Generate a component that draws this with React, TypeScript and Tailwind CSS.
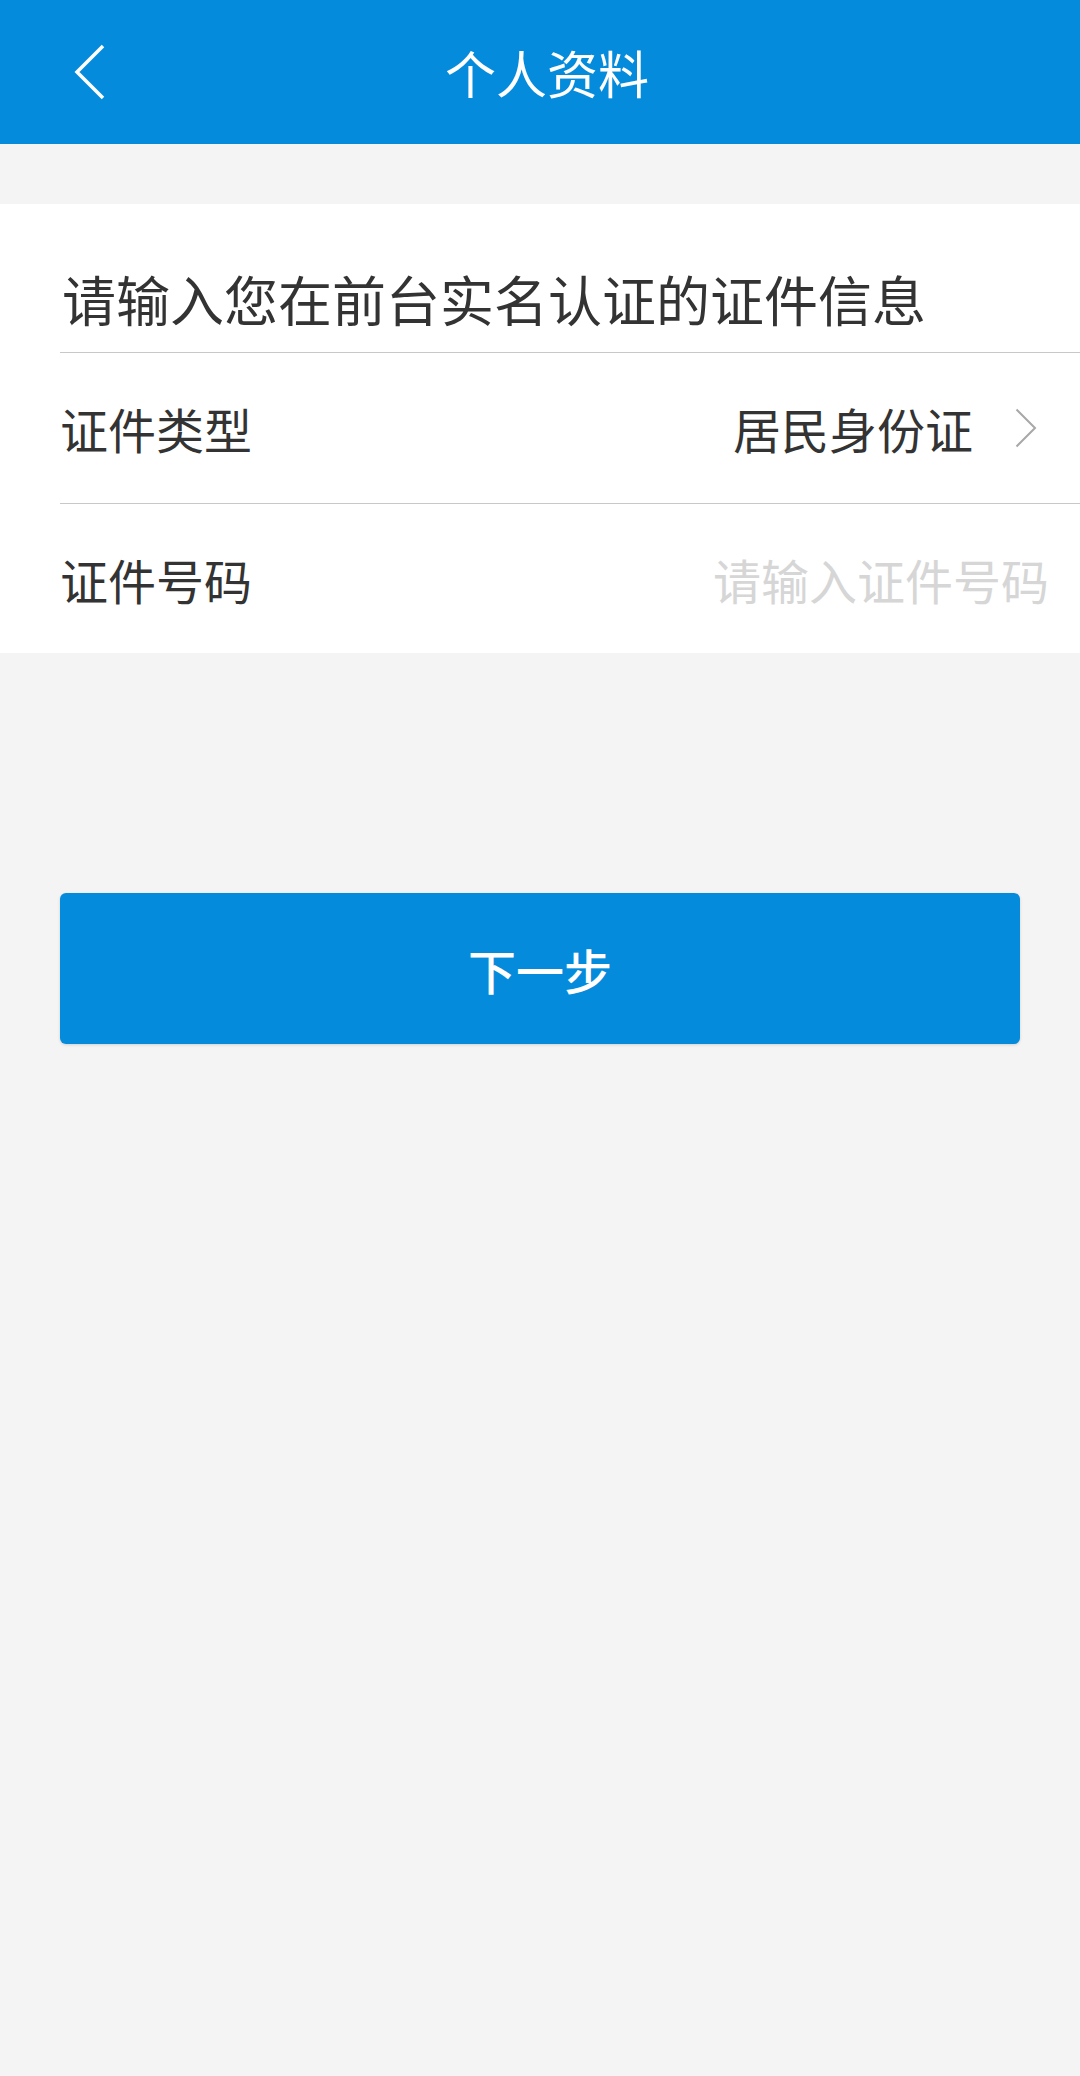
export default function App() {
  return (
    <div className="min-h-[2076px] w-[1080px] bg-[#f4f4f4] font-['Noto_Sans_CJK_SC','Noto_Sans',sans-serif]">
      {/* header */}
      <div className="grid h-[144px] grid-cols-[1fr_auto_1fr] items-center bg-[#058bdb]">
        <div className="pl-[74px]">
          <svg width="32" height="56" viewBox="0 0 32 56" fill="none">
            <path d="M29 2 L3 28 L29 54" stroke="white" strokeWidth="3.5" />
          </svg>
        </div>
        <h1 className="ml-[14px] text-[51px] leading-none text-white">个人资料</h1>
        <div />
      </div>

      <div className="mt-[60px] bg-white">
        <div className="h-[148px] pl-[62px] pt-[68px]">
          <p className="text-[54px] leading-none text-[#333333]">请输入您在前台实名认证的证件信息</p>
        </div>
        <div className="ml-[60px] h-px bg-[#c8c8c8]" />
        <div className="flex h-[150px] items-center justify-between pl-[60px] pr-[43px]">
          <span className="text-[48px] leading-none text-[#333333]">证件类型</span>
          <div className="flex items-center gap-[42px]">
            <span className="text-[48px] leading-none text-[#333333]">居民身份证</span>
            <svg width="22" height="40" viewBox="0 0 22 40" fill="none">
              <path d="M1.5 1.5 L20 20 L1.5 38.5" stroke="#a8a8a8" strokeWidth="2" />
            </svg>
          </div>
        </div>
        <div className="ml-[60px] h-px bg-[#c8c8c8]" />
        <div className="flex h-[149px] items-center justify-between pl-[60px] pr-[31px]">
          <span className="text-[48px] leading-none text-[#333333]">证件号码</span>
          <span className="text-[48px] leading-none text-[#d6d6d6]">请输入证件号码</span>
        </div>
      </div>

      <div className="px-[60px] pt-[240px]">
        <button className="flex h-[151px] w-full items-center justify-center rounded-[6px] bg-[#058bdb] text-[48px] font-medium leading-none text-white shadow-[0_1px_3px_rgba(0,0,0,0.15)]">
          下一步
        </button>
      </div>
    </div>
  );
}
